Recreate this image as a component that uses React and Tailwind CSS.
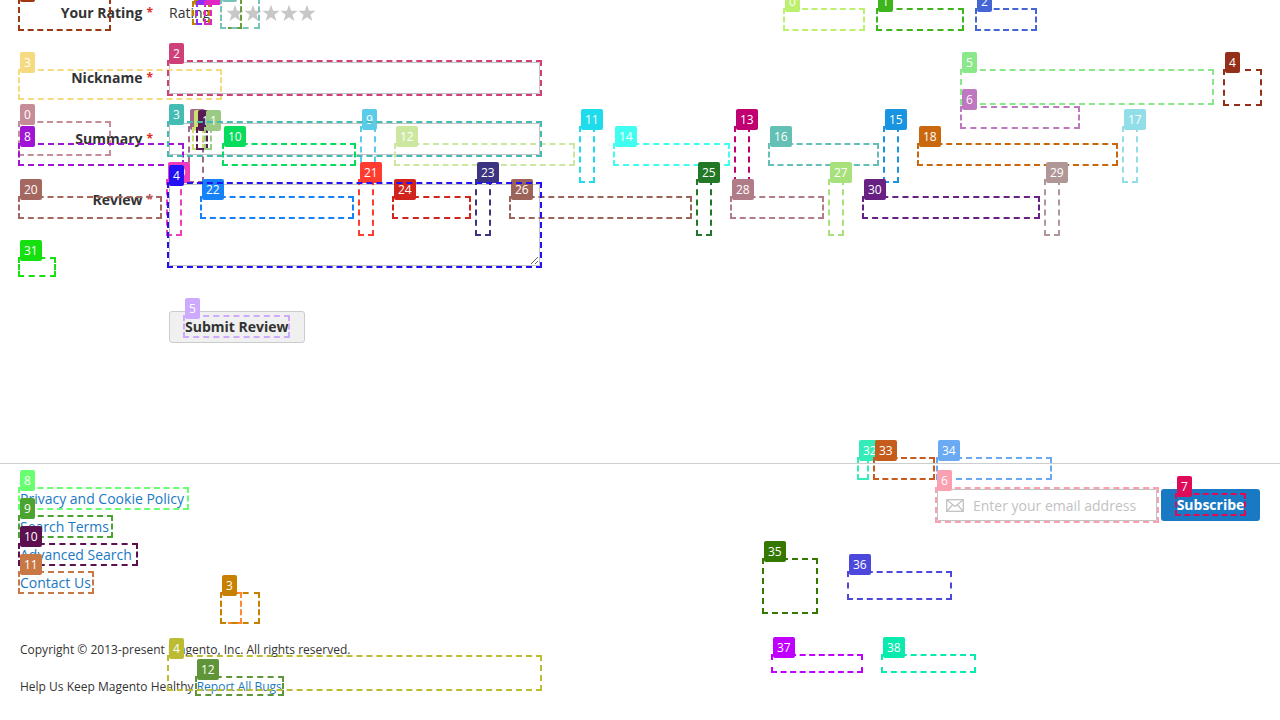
import React from "react";

// Each region: [left, top, width, height, colour, label]
const contentRegions = [
  [18, -2, 93, 33, "#9c3912", "7"],
  [192, 1, 18, 24, "#bb8409", "4"],
  [196, 1, 16, 24, "#8b2ff8", "5"],
  [204, 1, 8, 24, "#e226c4", "6"],
  [220, -2, 22, 31, "#6b9c3a", ""],
  [220, -2, 40, 31, "#76c4b8", "8"],
  [783, 8, 82, 23, "#bcf06e", "0"],
  [876, 8, 88, 23, "#3eb51c", "1"],
  [975, 8, 62, 23, "#4466d4", "2"],
  [18, 69, 204, 31, "#f6da80", "3"],
  [960, 69, 254, 36, "#8ae88a", "5"],
  [1223, 69, 39, 37, "#94301a", "4"],
  [960, 106, 120, 23, "#bd78c0", "6"],
  [18, 121, 93, 35, "#c68c98", "0"],
  [188, 126, 16, 57, "#a0688a", "7"],
  [192, 127, 12, 23, "#cce070", "1"],
  [196, 127, 12, 23, "#581c50", "1"],
  [204, 127, 8, 23, "#9aca84", "1"],
  [18, 143, 166, 23, "#a014d6", "8"],
  [360, 126, 16, 57, "#5accea", "9"],
  [222, 143, 134, 23, "#08dc5c", "10"],
  [579, 126, 16, 57, "#1edcec", "11"],
  [394, 143, 181, 23, "#cce8a0", "12"],
  [734, 126, 16, 57, "#c00070", "13"],
  [613, 143, 117, 23, "#40fff0", "14"],
  [883, 126, 16, 57, "#1894e0", "15"],
  [768, 143, 111, 23, "#64c0b4", "16"],
  [1122, 126, 16, 57, "#92dee8", "17"],
  [917, 143, 201, 23, "#ca680e", "18"],
  [166, 179, 16, 57, "#ee3cbc", "19"],
  [18, 196, 144, 23, "#a46860", "20"],
  [358, 179, 16, 57, "#ff3c30", "21"],
  [200, 196, 154, 23, "#1682f8", "22"],
  [475, 179, 16, 57, "#3c3480", "23"],
  [392, 196, 79, 23, "#d0241c", "24"],
  [696, 179, 16, 57, "#227824", "25"],
  [509, 196, 183, 23, "#9c6458", "26"],
  [828, 179, 16, 57, "#a8e07c", "27"],
  [730, 196, 94, 23, "#b07c88", "28"],
  [1044, 179, 16, 57, "#b09696", "29"],
  [862, 196, 178, 23, "#682082", "30"],
  [18, 257, 38, 20, "#16e010", "31"],
  [857, 457, 12, 23, "#34ecb8", "32"],
  [873, 457, 62, 23, "#c65c1c", "33"],
  [936, 457, 116, 23, "#6aaaf2", "34"],
  [762, 558, 56, 56, "#347800", "35"],
  [847, 571, 105, 29, "#4c48dc", "36"],
  [771, 654, 92, 19, "#c000ff", "37"],
  [881, 654, 95, 19, "#08eaae", "38"],
];

const controlRegions = [
  [167, 60, 375, 36, "#d04078", "2"],
  [167, 121, 375, 36, "#44bcb4", "3"],
  [167, 182, 375, 86, "#2410f4", "4"],
  [183, 315, 107, 23, "#ceaaff", "5"],
  [935, 487, 224, 36, "#faa0b0", "6"],
  [1175, 493, 71, 23, "#de0c58", "7"],
  [18, 487, 171, 23, "#68ff70", "8"],
  [18, 515, 95, 23, "#4ca430", "9"],
  [18, 543, 120, 23, "#5c1050", "10"],
  [18, 571, 76, 23, "#c87844", "11"],
  [195, 676, 89, 20, "#609438", "12"],
  [220, 592, 22, 32, "#ff8830", ""],
  [220, 592, 40, 32, "#c88000", "3"],
  [167, 655, 375, 36, "#bcbc34", "4"],
];

function Region({ region }) {
  const [left, top, width, height, color, label] = region;
  return (
    <>
      <div
        className="absolute border-2 border-dashed"
        style={{ left, top, width, height, borderColor: color }}
      />
      {label && (
        <span
          className="absolute h-[21px] rounded-xs px-1 text-xs leading-[21px] text-white"
          style={{ left: left + 2, top: top - 17, backgroundColor: color }}
        >
          {label}
        </span>
      )}
    </>
  );
}

function RegionOverlay() {
  return (
    <div className="pointer-events-none absolute inset-0 overflow-hidden">
      {[...contentRegions, ...controlRegions].map((region, i) => (
        <Region key={i} region={region} />
      ))}
    </div>
  );
}

const labelClass = "flex w-[129px] shrink-0 justify-end gap-1 pr-4 font-bold";
const fieldClass = "min-w-0 flex-1 rounded-[1px] border border-[#c2c2c2] bg-white px-[9px] outline-none";

function Required() {
  return <span className="text-xs leading-5 text-[#e02b27]">*</span>;
}

function Star({ value }) {
  return (
    <label className="relative flex h-5 w-[18px] items-center justify-center">
      <input
        type="radio"
        name="rating"
        value={value}
        aria-label={`${value} stars`}
        className="absolute inset-0 appearance-none"
      />
      <svg viewBox="0 0 18 18" className="size-[18px]" fill="#c7c7c7" aria-hidden="true">
        <path d="M9 .8l2.100 6h6.500l-5.100 3.900 1.900 6.200L9 13.200l-5.400 3.700 1.900-6.200L.4 6.800h6.500z" />
      </svg>
    </label>
  );
}

function ReviewForm() {
  return (
    <form className="px-5 sm:pl-10" onSubmit={(e) => e.preventDefault()}>
      <div className="flex max-w-[500px] flex-col gap-[29px]">
        <div className="flex h-[33px] pt-[3px]" role="group" aria-labelledby="rating-label">
          <span id="rating-label" className={labelClass}>
            Your Rating
            <Required />
          </span>
          <span>Rating</span>
          <div className="ml-4 flex">
            {[1, 2, 3, 4, 5].map((value) => (
              <Star key={value} value={value} />
            ))}
          </div>
        </div>
        <div className="flex">
          <label htmlFor="nickname" className={`${labelClass} pt-[6px]`}>
            Nickname
            <Required />
          </label>
          <input id="nickname" type="text" className={`${fieldClass} h-8`} />
        </div>
        <div className="flex">
          <label htmlFor="summary" className={`${labelClass} pt-[6px]`}>
            Summary
            <Required />
          </label>
          <input id="summary" type="text" className={`${fieldClass} h-8`} />
        </div>
        <div className="flex">
          <label htmlFor="review" className={`${labelClass} pt-[6px]`}>
            Review
            <Required />
          </label>
          <textarea id="review" rows={3} className={`${fieldClass} h-[82px] resize py-2`} />
        </div>
      </div>
      <button
        type="submit"
        className="mt-[45px] ml-[129px] h-8 rounded-[3px] border border-[#cccccc] bg-[#f0f0f0] px-[15px] leading-4 font-bold"
      >
        Submit Review
      </button>
    </form>
  );
}

const links = ["Privacy and Cookie Policy", "Search Terms", "Advanced Search", "Contact Us"];

function Footer() {
  return (
    <footer className="mt-[120px] border-t border-[#cecece] px-5 pt-[25px] pb-6">
      <div className="flex flex-wrap items-start justify-between gap-x-8">
        <ul className="flex flex-col gap-2">
          {links.map((text) => (
            <li key={text}>
              <a href="#" className="text-[#1979c3]">
                {text}
              </a>
            </li>
          ))}
        </ul>
        <form className="flex gap-1" onSubmit={(e) => e.preventDefault()}>
          <div className="relative">
            <svg
              viewBox="0 0 18 13"
              className="absolute top-[10px] left-[9px] h-[13px] w-[18px]"
              fill="none"
              stroke="#c2c2c2"
              strokeWidth="1.3"
              aria-hidden="true"
            >
              <rect x=".7" y=".7" width="16.600" height="11.600" />
              <path d="M1 1l8 6.500L17 1M1 12l5.500-6M17 12l-5.500-6" />
            </svg>
            <input
              type="email"
              aria-label="Email address"
              placeholder="Enter your email address"
              className="h-8 w-[220px] rounded-[1px] border border-[#c2c2c2] pr-2 pl-[35px] outline-none placeholder:text-[#c2c2c2]"
            />
          </div>
          <button
            type="submit"
            className="h-8 w-[99px] rounded-[3px] bg-[#1979c3] text-center leading-4 font-bold text-white"
          >
            Subscribe
          </button>
        </form>
      </div>
      <small className="mt-[49px] block text-xs leading-4">
        Copyright © 2013-present Magento, Inc. All rights reserved.
      </small>
      <p className="mt-[21px] text-xs leading-4">
        Help Us Keep Magento Healthy{" "}
        <a href="#" className="text-[#1979c3]">
          Report All Bugs
        </a>
      </p>
    </footer>
  );
}

export default function App() {
  return (
    <div className="relative min-h-screen overflow-hidden bg-white font-['Open_Sans',sans-serif] text-sm leading-5 text-[#333333]">
      <main>
        <ReviewForm />
      </main>
      <Footer />
      <RegionOverlay />
    </div>
  );
}
